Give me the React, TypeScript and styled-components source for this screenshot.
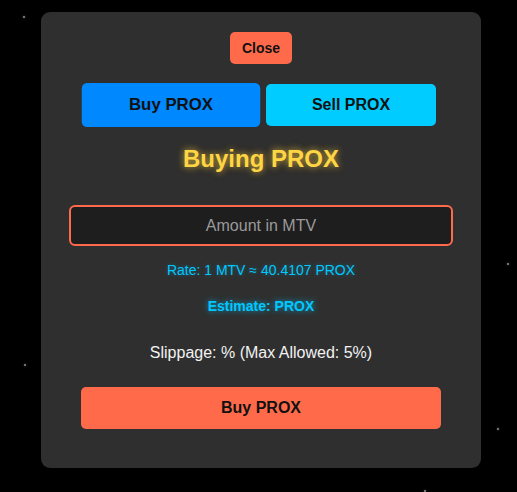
import React, { useState } from 'react';
import styled, { createGlobalStyle } from 'styled-components';

const GlobalStyle = createGlobalStyle`
  html, body {
    margin: 0;
    padding: 0;
    background: #000;
    font-family: "Liberation Sans", Arial, sans-serif;
  }
`;

const Page = styled.div`
  position: relative;
  width: 517px;
  height: 492px;
  overflow: hidden;
  background: #000;
  padding: 12px 0 0 41px;
  box-sizing: border-box;
`;

const Star = styled.span<{ x: number; y: number }>`
  position: absolute;
  left: ${p => p.x}px;
  top: ${p => p.y}px;
  width: 2px;
  height: 2px;
  border-radius: 50%;
  background: #8a8a8a;
  box-shadow: 0 0 2px rgba(255, 255, 255, 0.4);
`;

const Modal = styled.div`
  width: 440px;
  box-sizing: border-box;
  background: #2f2f2f;
  border-radius: 9px;
  padding: 20px 0 39px;
  display: flex;
  flex-direction: column;
  align-items: center;
  text-align: center;
`;

const CloseButton = styled.button`
  height: 32px;
  padding: 0 12px;
  border: none;
  border-radius: 5px;
  background: #ff6b4a;
  color: #111;
  font-family: inherit;
  font-size: 14px;
  font-weight: bold;
  cursor: pointer;
`;

const TabRow = styled.div`
  display: flex;
  gap: 10px;
  margin-top: 20px;
`;

const TabButton = styled.button<{ $variant: 'buy' | 'sell'; $active: boolean }>`
  width: 170px;
  height: 42px;
  border: none;
  border-radius: 5px;
  background: ${p => (p.$variant === 'buy' ? '#0088ff' : '#00ccff')};
  color: #111;
  font-family: inherit;
  font-size: 16px;
  font-weight: bold;
  cursor: pointer;
  transform: ${p => (p.$active ? 'scale(1.05)' : 'none')};
`;

const Title = styled.h2`
  margin: 19px 0 0;
  font-size: 24px;
  line-height: 28px;
  font-weight: bold;
  color: #ffd544;
  text-shadow: 0 0 6px rgba(255, 213, 68, 0.55), 0 0 10px rgba(255, 200, 40, 0.3);
`;

const AmountInput = styled.input`
  margin-top: 32px;
  width: 384px;
  height: 41px;
  box-sizing: border-box;
  border: 2px solid #ff6b4a;
  border-radius: 6px;
  background: #1e1e1e;
  color: #ddd;
  font-family: inherit;
  font-size: 16px;
  text-align: center;
  outline: none;

  &::placeholder {
    color: #9a9a9a;
  }
`;

const InfoLine = styled.p<{ $strong?: boolean; $gap: number }>`
  margin: ${p => p.$gap}px 0 0;
  font-size: 14px;
  line-height: 16px;
  color: #00c8ff;
  font-weight: ${p => (p.$strong ? 'bold' : 'normal')};
  text-shadow: ${p =>
    p.$strong
      ? '0 0 6px rgba(0, 200, 255, 0.7)'
      : '0 0 4px rgba(0, 200, 255, 0.35)'};
`;

const Slippage = styled.p`
  margin: 30px 0 0;
  font-size: 16px;
  line-height: 18px;
  color: #f2f2f2;
`;

const SubmitButton = styled.button`
  margin-top: 25px;
  width: 360px;
  height: 42px;
  border: none;
  border-radius: 5px;
  background: #ff6b4a;
  color: #111;
  font-family: inherit;
  font-size: 16px;
  font-weight: bold;
  cursor: pointer;
`;

const stars = [
  { x: 23, y: 16 },
  { x: 24, y: 364 },
  { x: 507, y: 263 },
  { x: 497, y: 428 },
  { x: 424, y: 490 },
];

export default function App() {
  const [mode, setMode] = useState<'buy' | 'sell'>('buy');
  const [amount, setAmount] = useState('');
  const rate = 40.4107;

  const estimate = amount && !isNaN(Number(amount)) ? (Number(amount) * rate).toFixed(4) : '';

  return (
    <>
      <GlobalStyle />
      <Page>
        {stars.map((s, i) => (
          <Star key={i} x={s.x} y={s.y} />
        ))}
        <Modal>
          <CloseButton>Close</CloseButton>
          <TabRow>
            <TabButton $variant="buy" $active={mode === 'buy'} onClick={() => setMode('buy')}>
              Buy PROX
            </TabButton>
            <TabButton $variant="sell" $active={mode === 'sell'} onClick={() => setMode('sell')}>
              Sell PROX
            </TabButton>
          </TabRow>
          <Title>{mode === 'buy' ? 'Buying PROX' : 'Selling PROX'}</Title>
          <AmountInput
            placeholder="Amount in MTV"
            value={amount}
            onChange={e => setAmount(e.target.value)}
          />
          <InfoLine $gap={16}>Rate: 1 MTV ≈ {rate} PROX</InfoLine>
          <InfoLine $gap={20} $strong>
            Estimate: {estimate} PROX
          </InfoLine>
          <Slippage>Slippage: % (Max Allowed: 5%)</Slippage>
          <SubmitButton>{mode === 'buy' ? 'Buy PROX' : 'Sell PROX'}</SubmitButton>
        </Modal>
      </Page>
    </>
  );
}
